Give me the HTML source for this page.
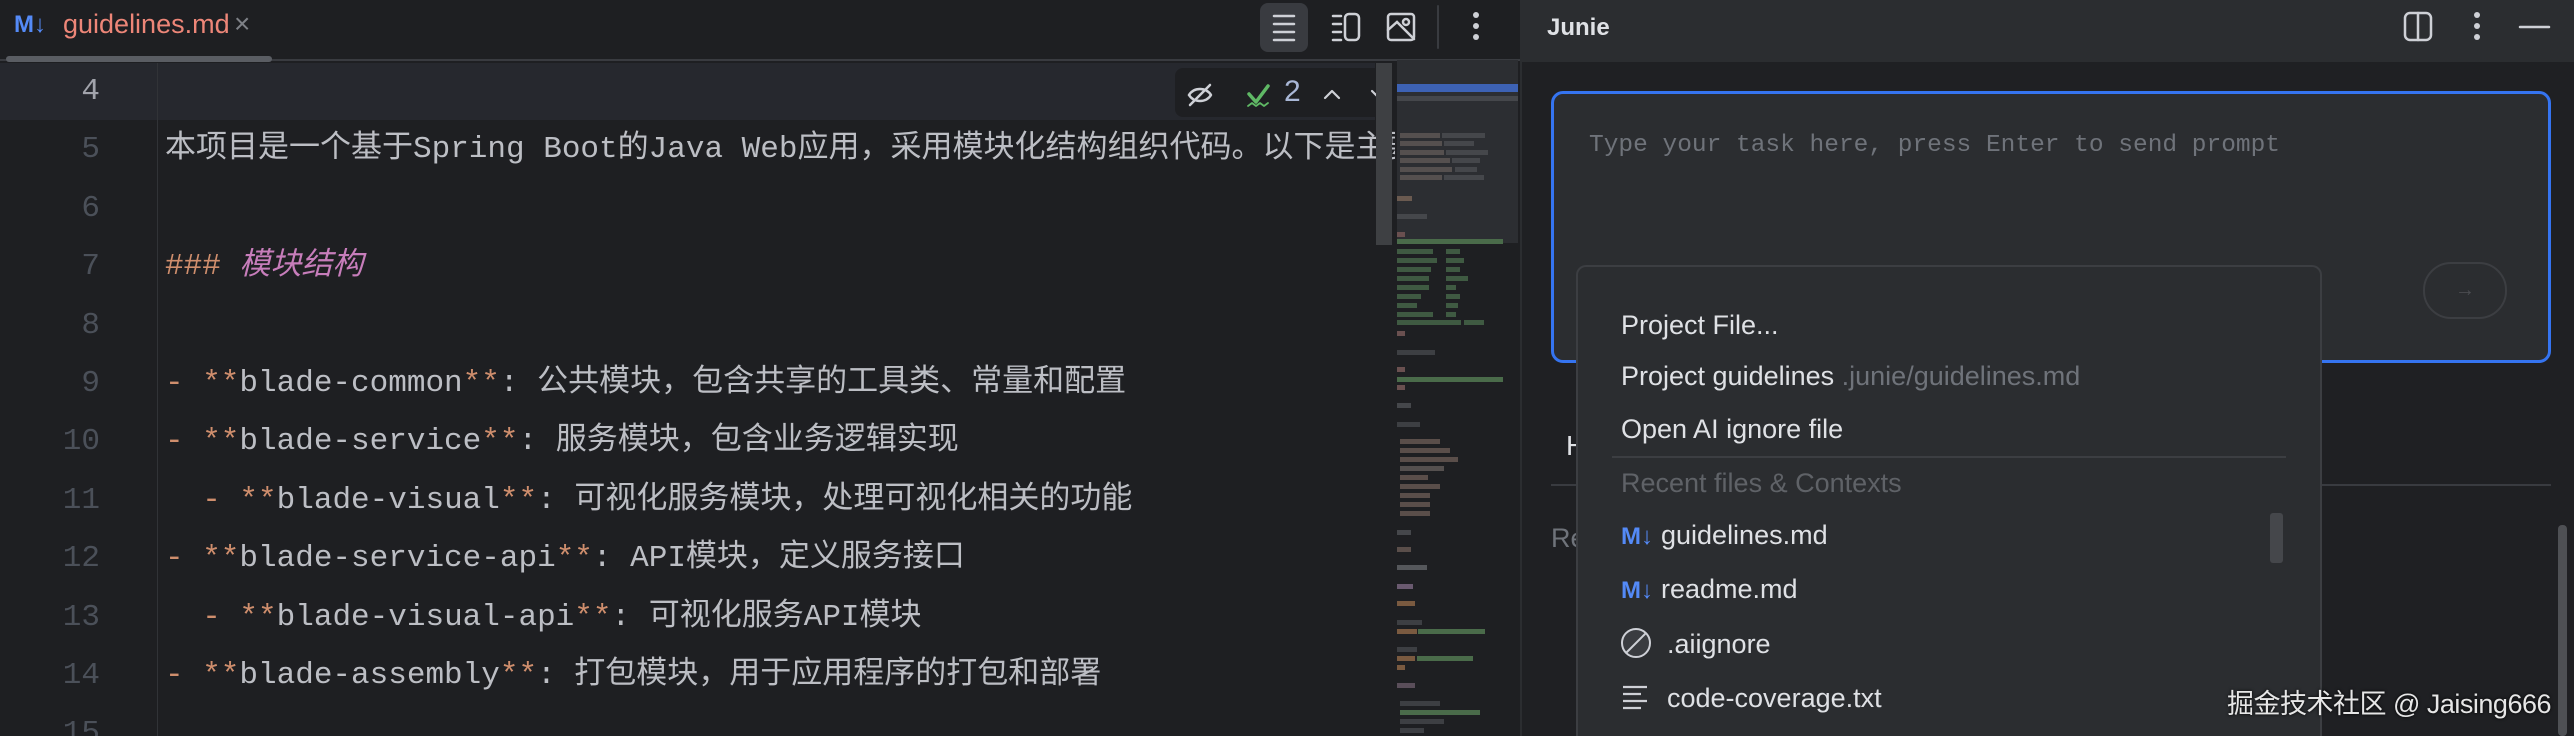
<!DOCTYPE html>
<html style="width:2574px;height:736px;overflow:hidden"><head><meta charset="utf-8"><style>
*{margin:0;padding:0;box-sizing:border-box}
body{width:2574px;height:736px;overflow:hidden;background:#1e1f22;position:relative;font-family:"Liberation Sans","Noto Sans CJK SC",sans-serif}
.a{position:absolute}
.ln{position:absolute;left:0;width:100px;text-align:right;font:31px "Liberation Mono",monospace;color:#4b5059;line-height:58px}
.code{position:absolute;left:165px;font:31px "Liberation Mono","Noto Sans CJK SC",monospace;color:#bcbec4;line-height:58px;white-space:pre}
.o{color:#cf8e6d}
.m{position:absolute;height:5px}
.pi{position:absolute;left:1621px;font-size:27px;color:#dfe1e5;white-space:nowrap;line-height:34px}
.md{color:#548af7;font-weight:bold;font-size:24px;margin-right:8px}
</style></head><body>
<div class="a" style="left:0;top:0;width:1520px;height:61px;background:#1e1f22;border-bottom:2px solid #393b40"></div>
<div class="a" style="left:14px;top:11px;font-size:24px;font-weight:bold;color:#548af7">M↓</div>
<div class="a" style="left:63px;top:9px;font-size:27px;color:#ed8678">guidelines.md</div>
<div class="a" style="left:234px;top:8px;font-size:28px;color:#7e8187">×</div>
<div class="a" style="left:6px;top:56px;width:266px;height:6px;border-radius:3px;background:#5a5d63"></div>
<div class="a" style="left:1260px;top:3px;width:48px;height:49px;border-radius:8px;background:#393b40"></div>
<svg class="a" style="left:1260px;top:0" width="240" height="56" fill="none" stroke="#ced0d6" stroke-width="2.5" stroke-linecap="round">
<path d="M14 16h20M14 24h20M14 32h20M14 40h20"/>
<path d="M73 16h8M73 24h8M73 32h8M73 40h8"/><rect x="85" y="14" width="14" height="26" rx="4"/>
<rect x="128" y="14" width="26" height="26" rx="3"/><path d="M128 30l9-8 17 17"/><circle cx="146" cy="22" r="3"/>
<path d="M178 6v42" stroke="#393b40" stroke-width="2"/>
</svg>
<div class="a" style="left:1473px;top:12px;width:6px;height:6px;border-radius:3px;background:#ced0d6;box-shadow:0 11px 0 #ced0d6,0 22px 0 #ced0d6"></div>
<div class="a" style="left:0;top:63px;width:1375px;height:57px;background:#26282e"></div>
<div class="a" style="left:157px;top:63px;width:1px;height:673px;background:#313337"></div>
<div class="ln" style="top:63px;color:#a1a3ab">4</div>
<div class="ln" style="top:121.4px">5</div>
<div class="ln" style="top:179.8px">6</div>
<div class="ln" style="top:238.2px">7</div>
<div class="ln" style="top:296.6px">8</div>
<div class="ln" style="top:355px">9</div>
<div class="ln" style="top:413.4px">10</div>
<div class="ln" style="top:471.8px">11</div>
<div class="ln" style="top:530.2px">12</div>
<div class="ln" style="top:588.6px">13</div>
<div class="ln" style="top:647px">14</div>
<div class="ln" style="top:705.4px;height:31px;overflow:hidden">15</div>
<div class="a" style="left:165px;top:121px;width:1230px;height:60px;overflow:hidden"><div class="code" style="left:0;top:0">本项目是一个基于Spring Boot的Java Web应用，采用模块化结构组织代码。以下是主要模块</div></div>
<div class="code" style="top:238.2px"><span class="o">###</span> <i style="color:#c77dbb">模块结构</i></div>
<div class="code" style="top:355px"><span class="o">- **</span>blade-common<span class="o">**</span>: 公共模块，包含共享的工具类、常量和配置</div>
<div class="code" style="top:413.4px"><span class="o">- **</span>blade-service<span class="o">**</span>: 服务模块，包含业务逻辑实现</div>
<div class="code" style="top:471.8px">  <span class="o">- **</span>blade-visual<span class="o">**</span>: 可视化服务模块，处理可视化相关的功能</div>
<div class="code" style="top:530.2px"><span class="o">- **</span>blade-service-api<span class="o">**</span>: API模块，定义服务接口</div>
<div class="code" style="top:588.6px">  <span class="o">- **</span>blade-visual-api<span class="o">**</span>: 可视化服务API模块</div>
<div class="code" style="top:647px"><span class="o">- **</span>blade-assembly<span class="o">**</span>: 打包模块，用于应用程序的打包和部署</div>
<div class="a" style="left:1175px;top:68px;width:217px;height:49px;border-radius:8px;background:#1e1f22"></div>
<svg class="a" style="left:1175px;top:68px" width="217" height="49" fill="none" stroke-linecap="round" stroke-linejoin="round">
<path d="M14 27c5-8 17-8 22 0c-5 8-17 8-22 0" stroke="#ced0d6" stroke-width="2.5"/><path d="M15 37l20-20" stroke="#ced0d6" stroke-width="2.5"/>
<path d="M74 26l7 8 12-16" stroke="#5fb865" stroke-width="3.5"/><path d="M73 38l4-3 4 3 4-3 4 3 4-3" stroke="#5fb865" stroke-width="1.8"/>
<path d="M150 30l7-7 7 7M197 23l7 7 7-7" stroke="#ced0d6" stroke-width="2.2"/>
</svg>
<div class="a" style="left:1284px;top:75px;font-size:30px;color:#a9b7d6">2</div>
<div class="a" style="left:1376px;top:63px;width:16px;height:182px;background:#3e4043"></div>
<div class="a" style="left:1397px;top:60px;width:121px;height:183px;background:#2c2e32"></div>
<div class="m" style="left:1397px;top:84px;width:121px;height:8px;background:#3d62b4"></div>
<div class="m" style="left:1397px;top:96px;width:121px;background:#45474b"></div>
<div class="m" style="left:1400px;top:133px;width:40px;background:#55504f"></div><div class="m" style="left:1442px;top:133px;width:43px;background:#45474b"></div>
<div class="m" style="left:1400px;top:141px;width:42px;background:#55504f"></div><div class="m" style="left:1444px;top:141px;width:30px;background:#45474b"></div>
<div class="m" style="left:1400px;top:150px;width:44px;background:#55504f"></div><div class="m" style="left:1446px;top:150px;width:42px;background:#45474b"></div>
<div class="m" style="left:1400px;top:158px;width:50px;background:#55504f"></div><div class="m" style="left:1452px;top:158px;width:28px;background:#45474b"></div>
<div class="m" style="left:1400px;top:167px;width:52px;background:#55504f"></div><div class="m" style="left:1455px;top:167px;width:22px;background:#45474b"></div>
<div class="m" style="left:1400px;top:175px;width:42px;background:#55504f"></div><div class="m" style="left:1444px;top:175px;width:40px;background:#45474b"></div>
<div class="m" style="left:1397px;top:196px;width:15px;background:#6a5a50"></div>
<div class="m" style="left:1397px;top:214px;width:30px;background:#45474b"></div>
<div class="m" style="left:1397px;top:232px;width:8px;background:#6a5050"></div>
<div class="m" style="left:1397px;top:239px;width:106px;background:#4a6b4a"></div>
<div class="m" style="left:1397px;top:249px;width:36px;background:#3f5a42"></div><div class="m" style="left:1446px;top:249px;width:14px;background:#3f5a42"></div>
<div class="m" style="left:1397px;top:258px;width:40px;background:#3f5a42"></div><div class="m" style="left:1446px;top:258px;width:18px;background:#3f5a42"></div>
<div class="m" style="left:1397px;top:267px;width:34px;background:#3f5a42"></div><div class="m" style="left:1446px;top:267px;width:14px;background:#3f5a42"></div>
<div class="m" style="left:1397px;top:276px;width:32px;background:#3f5a42"></div><div class="m" style="left:1446px;top:276px;width:22px;background:#3f5a42"></div>
<div class="m" style="left:1397px;top:285px;width:32px;background:#3f5a42"></div><div class="m" style="left:1446px;top:285px;width:10px;background:#3f5a42"></div>
<div class="m" style="left:1397px;top:294px;width:24px;background:#3f5a42"></div><div class="m" style="left:1446px;top:294px;width:14px;background:#3f5a42"></div>
<div class="m" style="left:1397px;top:303px;width:20px;background:#3f5a42"></div><div class="m" style="left:1446px;top:303px;width:12px;background:#3f5a42"></div>
<div class="m" style="left:1397px;top:312px;width:36px;background:#3f5a42"></div><div class="m" style="left:1446px;top:312px;width:10px;background:#3f5a42"></div>
<div class="m" style="left:1397px;top:320px;width:64px;background:#3f5a42"></div><div class="m" style="left:1464px;top:320px;width:20px;background:#3f5a42"></div>
<div class="m" style="left:1397px;top:331px;width:8px;background:#6a5050"></div>
<div class="m" style="left:1397px;top:350px;width:38px;background:#3d3f43"></div>
<div class="m" style="left:1397px;top:367px;width:8px;background:#6a5050"></div>
<div class="m" style="left:1397px;top:377px;width:106px;background:#4a6b4a"></div>
<div class="m" style="left:1397px;top:385px;width:8px;background:#6a5050"></div>
<div class="m" style="left:1397px;top:403px;width:14px;background:#45474b"></div>
<div class="m" style="left:1397px;top:422px;width:23px;background:#3d3f43"></div>
<div class="m" style="left:1400px;top:439px;width:40px;background:#5a4e4a"></div>
<div class="m" style="left:1400px;top:448px;width:50px;background:#5a4e4a"></div>
<div class="m" style="left:1400px;top:457px;width:58px;background:#5a4e4a"></div>
<div class="m" style="left:1400px;top:466px;width:44px;background:#55504f"></div>
<div class="m" style="left:1400px;top:475px;width:28px;background:#5a4e4a"></div>
<div class="m" style="left:1400px;top:484px;width:40px;background:#5a4e4a"></div>
<div class="m" style="left:1400px;top:493px;width:30px;background:#5a4e4a"></div>
<div class="m" style="left:1400px;top:502px;width:30px;background:#5a4e4a"></div>
<div class="m" style="left:1400px;top:511px;width:30px;background:#5a4e4a"></div>
<div class="m" style="left:1397px;top:530px;width:14px;background:#45474b"></div>
<div class="m" style="left:1397px;top:547px;width:14px;background:#5a4e4a"></div>
<div class="m" style="left:1397px;top:565px;width:30px;background:#55575b"></div>
<div class="m" style="left:1397px;top:584px;width:16px;background:#6a5a70"></div>
<div class="m" style="left:1397px;top:601px;width:18px;background:#7a5a40"></div>
<div class="m" style="left:1397px;top:620px;width:25px;background:#3d3f43"></div>
<div class="m" style="left:1397px;top:629px;width:20px;background:#7a5a40"></div><div class="m" style="left:1418px;top:629px;width:67px;background:#4a6b4a"></div>
<div class="m" style="left:1397px;top:647px;width:20px;background:#3d3f43"></div>
<div class="m" style="left:1397px;top:656px;width:18px;background:#7a5a40"></div><div class="m" style="left:1417px;top:656px;width:56px;background:#4a6b4a"></div>
<div class="m" style="left:1397px;top:665px;width:8px;background:#7a5a40"></div>
<div class="m" style="left:1397px;top:683px;width:18px;background:#5a4e5a"></div>
<div class="m" style="left:1400px;top:701px;width:40px;background:#3d3f43"></div>
<div class="m" style="left:1400px;top:710px;width:80px;background:#4a6b4a"></div>
<div class="m" style="left:1400px;top:719px;width:44px;background:#3d3f43"></div>
<div class="m" style="left:1400px;top:728px;width:24px;background:#3d3f43"></div>
<div class="a" style="left:1520px;top:0;width:1054px;height:736px;background:#1f2023;border-left:2px solid #2b2d30"></div>
<div class="a" style="left:1520px;top:0;width:1054px;height:62px;background:#2b2d30"></div>
<div class="a" style="left:1547px;top:14px;font-size:24px;font-weight:bold;color:#dfe1e5">Junie</div>
<svg class="a" style="left:2400px;top:8px" width="160" height="40" fill="none" stroke="#ced0d6" stroke-width="2.5" stroke-linecap="round">
<rect x="5" y="5" width="26" height="27" rx="5"/><path d="M18 5v27"/><path d="M120 19h29"/></svg>
<div class="a" style="left:2474px;top:12px;width:6px;height:6px;border-radius:3px;background:#ced0d6;box-shadow:0 11px 0 #ced0d6,0 22px 0 #ced0d6"></div>
<div class="a" style="left:1551px;top:91px;width:1000px;height:272px;border:3px solid #3574f0;border-radius:12px;background:#2b2d30"></div>
<div class="a" style="left:1589px;top:132px;font:24.5px 'Liberation Mono',monospace;color:#6f737a">Type your task here, press Enter to send prompt</div>
<div class="a" style="left:2423px;top:262px;width:84px;height:57px;border:2px solid #3c3e42;border-radius:28px;color:#4b4d51;font-size:20px;text-align:center;line-height:52px">→</div>
<div class="a" style="left:1566px;top:430px;font-size:28px;color:#dfe1e5">H</div>
<div class="a" style="left:1551px;top:484px;width:1000px;height:2px;background:#393b40"></div>
<div class="a" style="left:1551px;top:523px;font-size:27px;color:#6f737a">Re</div>
<div class="a" style="left:2558px;top:525px;width:9px;height:211px;background:#4e5054;border-radius:4px"></div>
<div class="a" style="left:1576px;top:265px;width:746px;height:471px;background:#2b2d30;border:2px solid #3c3e42;border-bottom:none;border-radius:10px 10px 0 0"></div>
<div class="pi" style="top:308px">Project File...</div>
<div class="pi" style="top:359px">Project guidelines <span style="color:#6f737a">.junie/guidelines.md</span></div>
<div class="pi" style="top:412px">Open AI ignore file</div>
<div class="a" style="left:1612px;top:456px;width:674px;height:2px;background:#3c3e42"></div>
<div class="pi" style="top:466px;color:#5f6267">Recent files &amp; Contexts</div>
<div class="pi" style="top:518px"><span class="md">M↓</span>guidelines.md</div>
<div class="pi" style="top:572px"><span class="md">M↓</span>readme.md</div>
<div class="pi" style="top:627px"><svg width="36" height="32" style="vertical-align:-6px;margin-right:10px" fill="none" stroke="#ced0d6" stroke-width="2"><circle cx="15" cy="16" r="14" fill="#3a3c40"/><path d="M5 26L25 6"/></svg>.aiignore</div>
<div class="pi" style="top:681px"><svg width="36" height="32" style="vertical-align:-6px;margin-right:10px" fill="none" stroke="#ced0d6" stroke-width="2.2"><path d="M2 6h24M2 13h18M2 20h24M2 27h18"/></svg>code-coverage.txt</div>
<div class="a" style="left:2270px;top:513px;width:13px;height:50px;border-radius:3px;background:#45474b"></div>
<div class="a" style="right:23px;top:682px;font-size:27px;color:#e6e6e6;text-shadow:0 0 3px #000;white-space:nowrap;letter-spacing:-0.5px">掘金技术社区 @ Jaising666</div>
</body></html>
